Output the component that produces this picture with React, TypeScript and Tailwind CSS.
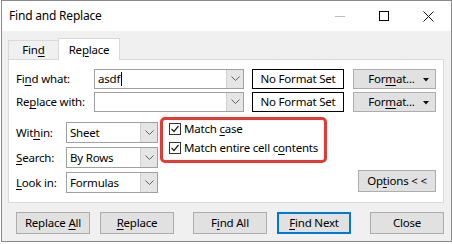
import React from 'react';

const Chevron = () => (
  <svg width="9" height="6" viewBox="0 0 9 6">
    <path d="M0.5 0.5 L4.5 4.5 L8.5 0.5" stroke="#606060" strokeWidth="1" fill="none" />
  </svg>
);

const Combo = ({ value, className, cursor }: { value?: string; className: string; cursor?: boolean }) => (
  <div className={`flex border border-[#a0a0a0] bg-white ${className}`}>
    <div className="flex flex-1 items-center pl-[3px] text-[11.5px]">
      <span>{value}</span>
      {cursor && <span className="ml-[1px] h-[14px] w-[1px] bg-black" />}
    </div>
    <div className="flex w-[17px] items-center justify-center border-l border-[#d0d0d0] bg-[#e5e5e5]">
      <Chevron />
    </div>
  </div>
);

const Btn = ({ children, className }: { children: React.ReactNode; className: string }) => (
  <div className={`flex items-center justify-center bg-[#e1e1e1] text-[11.5px] whitespace-nowrap ${className}`}>
    <span>{children}</span>
  </div>
);

const U = ({ children }: { children: React.ReactNode }) => (
  <span className="underline decoration-1 underline-offset-[2px]">{children}</span>
);

const FormatBtn = () => (
  <div className="relative flex h-[20px] w-[83px] items-center justify-center border border-[#adadad] bg-[#e1e1e1] text-[11.5px]">
    <span className="-ml-[6px]">For<U>m</U>at...</span>
    <svg className="absolute right-[6px] top-[8px]" width="6" height="4" viewBox="0 0 6 4">
      <path d="M0 0 H6 L3 3.5 Z" fill="#111" />
    </svg>
  </div>
);

const Check = ({ children }: { children: React.ReactNode }) => (
  <div className="flex h-[16px] items-center gap-[3px] whitespace-nowrap">
    <div className="flex h-[12px] w-[12px] items-center justify-center border border-[#333] bg-white">
      <svg width="10" height="10" viewBox="0 0 10 10">
        <path d="M1.5 5 L4 7.5 L8.5 2" stroke="#222" strokeWidth="1.2" fill="none" />
      </svg>
    </div>
    <span className="text-[11.5px]">{children}</span>
  </div>
);

const NoFormat = () => (
  <div className="ml-[8px] flex h-[20px] w-[92px] items-center justify-center border border-black text-[11.5px] whitespace-nowrap">
    No Format Set
  </div>
);

export default function App() {
  return (
    <div className="h-[244px] w-[452px] bg-white font-['Noto_Sans',sans-serif] tracking-[-0.2px] text-black">
      <div className="ml-[1px] flex h-[242px] w-[451px] flex-col border border-[#8a8a8a]">
        {/* title bar */}
        <div className="flex h-[30px] items-center bg-white">
          <span className="pl-[7px] text-[12px]">Find and Replace</span>
          <div className="ml-auto mr-[1px] flex h-full">
            <div className="flex w-[44px] items-center justify-center">
              <div className="h-[1px] w-[10px] bg-[#bdbdbd]" />
            </div>
            <div className="flex w-[44px] items-center justify-center">
              <div className="h-[10px] w-[10px] border border-black" />
            </div>
            <div className="flex w-[44px] items-center justify-center">
              <svg width="11" height="11" viewBox="0 0 11 11">
                <path d="M0.5 0.5 L10.5 10.5 M10.5 0.5 L0.5 10.5" stroke="#111" strokeWidth="1" />
              </svg>
            </div>
          </div>
        </div>

        {/* body */}
        <div className="flex flex-1 flex-col bg-[#f0f0f0] pl-[6px] pt-[7px]">
          {/* tabs */}
          <div className="flex items-end">
            <div className="flex h-[19px] w-[51px] items-center justify-center border border-b-0 border-[#d9d9d9] text-[11.5px]">
              <span>Fin<U>d</U></span>
            </div>
            <div className="relative z-10 -mb-px -ml-px flex h-[22px] w-[62px] items-center justify-center border border-b-0 border-[#d9d9d9] bg-white text-[11.5px]">
              <span>Re<U>p</U>lace</span>
            </div>
          </div>

          {/* panel */}
          <div className="flex h-[144px] w-[436px] flex-col border border-[#d9d9d9] bg-white px-[7px] pt-[9px]">
            <div className="flex h-[20px] items-center">
              <span className="w-[78px] text-[11.5px] whitespace-nowrap">Fi<U>n</U>d what:</span>
              <Combo className="h-[20px] w-[150px]" value="asdf" cursor />
              <NoFormat />
              <div className="ml-[9px]">
                <FormatBtn />
              </div>
            </div>
            <div className="mt-[3px] flex h-[20px] items-center">
              <span className="w-[78px] text-[11.5px] whitespace-nowrap">Re<U>p</U>lace with:</span>
              <Combo className="h-[20px] w-[150px]" />
              <NoFormat />
              <div className="ml-[9px]">
                <FormatBtn />
              </div>
            </div>

            <div className="mt-[5px] flex">
              <div className="flex w-[144px] flex-col gap-[4px] pt-[5px]">
                <div className="flex h-[21px] items-center">
                  <span className="w-[50px] text-[11.5px]">Wit<U>h</U>in:</span>
                  <Combo className="h-[21px] w-[92px]" value="Sheet" />
                </div>
                <div className="flex h-[21px] items-center">
                  <span className="w-[50px] text-[11.5px]"><U>S</U>earch:</span>
                  <Combo className="h-[21px] w-[92px]" value="By Rows" />
                </div>
                <div className="flex h-[21px] items-center">
                  <span className="w-[50px] text-[11.5px] whitespace-nowrap"><U>L</U>ook in:</span>
                  <Combo className="h-[21px] w-[92px]" value="Formulas" />
                </div>
              </div>

              <div className="flex h-[46px] w-[167px] flex-col gap-[3px] rounded-[5px] border-[3px] border-[#e53935] pl-[6px] pt-[1px]">
                <Check>Match <U>c</U>ase</Check>
                <Check>Match entire cell c<U>o</U>ntents</Check>
              </div>

              <Btn className="mb-[1px] ml-auto h-[22px] w-[78px] self-end border border-[#adadad]">
                Op<U>t</U>ions &lt; &lt;
              </Btn>
            </div>
          </div>

          {/* buttons */}
          <div className="mt-[9px] flex pl-[8px]">
            <Btn className="h-[22px] w-[74px] border border-[#adadad]">Replace <U>A</U>ll</Btn>
            <Btn className="ml-[10px] h-[22px] w-[74px] border border-[#adadad]"><U>R</U>eplace</Btn>
            <Btn className="ml-[19px] h-[22px] w-[74px] border border-[#adadad]">F<U>i</U>nd All</Btn>
            <Btn className="ml-[10px] h-[22px] w-[74px] border-2 border-[#0078d7]"><U>F</U>ind Next</Btn>
            <Btn className="ml-[19px] h-[22px] w-[74px] border border-[#adadad]">Close</Btn>
          </div>
        </div>
      </div>
    </div>
  );
}
